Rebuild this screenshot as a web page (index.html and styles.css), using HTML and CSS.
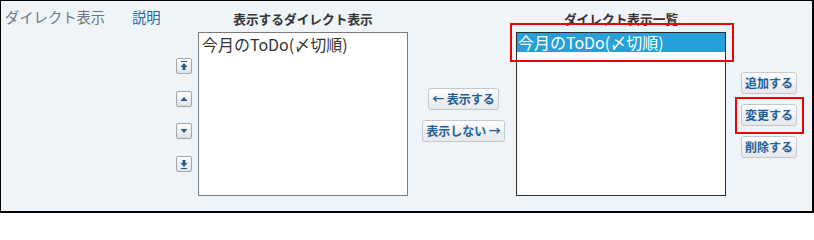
FILE: index.html
```html
<!DOCTYPE html>
<html lang="ja">
<head>
<meta charset="utf-8">
<title>ダイレクト表示</title>
<link rel="stylesheet" href="styles.css">
</head>
<body>
<div class="panel">
  <div class="label">ダイレクト表示</div>
  <div class="help"><a href="#">説明</a></div>
  <div class="title t-left">表示するダイレクト表示</div>
  <div class="title t-right">ダイレクト表示一覧</div>

  <div class="order-col">
    <button class="icon-btn" title="先頭へ">
      <svg viewBox="0 0 14 14" width="14" height="14"><rect x="4" y="2" width="6" height="1" fill="#1d5f8c"/><polygon points="7,4 3.5,8 10.5,8" fill="#1d5f8c"/><rect x="5.5" y="8" width="3" height="3" fill="#1d5f8c"/></svg>
    </button>
    <button class="icon-btn" title="上へ">
      <svg viewBox="0 0 14 14" width="14" height="14"><polygon points="7,5 3.5,9 10.5,9" fill="#1d5f8c"/></svg>
    </button>
    <button class="icon-btn" title="下へ">
      <svg viewBox="0 0 14 14" width="14" height="14"><polygon points="3.5,5 10.5,5 7,9" fill="#1d5f8c"/></svg>
    </button>
    <button class="icon-btn" title="末尾へ">
      <svg viewBox="0 0 14 14" width="14" height="14"><rect x="5.5" y="3" width="3" height="3" fill="#1d5f8c"/><polygon points="3.5,6 10.5,6 7,10" fill="#1d5f8c"/><rect x="4" y="11" width="6" height="1" fill="#1d5f8c"/></svg>
    </button>
  </div>

  <div class="list list-left">
    <div class="opt">今月のToDo(〆切順)</div>
  </div>

  <div class="mid-col">
    <button class="btn">← 表示する</button>
    <button class="btn">表示しない →</button>
  </div>

  <div class="list list-right">
    <div class="opt selected">今月のToDo(〆切順)</div>
  </div>

  <div class="action-col">
    <button class="btn">追加する</button>
    <button class="btn">変更する</button>
    <button class="btn">削除する</button>
  </div>

  <div class="mark mark-list"></div>
  <div class="mark mark-btn"></div>
</div>
</body>
</html>
```
FILE: styles.css
```css
html, body {
  margin: 0;
  padding: 0;
  background: #ffffff;
}

.panel {
  position: relative;
  box-sizing: border-box;
  width: 814px;
  height: 213px;
  border-style: solid;
  border-color: #000;
  border-width: 1px 2px 2px 1px;
  background: #eff4f8;
  font-family: "Noto Sans CJK JP", "Noto Sans", sans-serif;
  display: grid;
  grid-template-columns: 131px 44px 22px 210px 108px 210px 1fr;
  grid-template-rows: 31px 1fr;
}

.label {
  grid-column: 1;
  grid-row: 1;
  padding: 6px 0 0 4px;
  font-size: 14.3px;
  line-height: 20px;
  color: #687886;
  white-space: nowrap;
}

.help {
  grid-column: 2;
  grid-row: 1;
  padding-top: 6px;
  font-size: 14.3px;
  line-height: 20px;
}

.help a {
  color: #1a6ca6;
  text-decoration: none;
}

.title {
  grid-row: 1;
  padding-top: 9px;
  font-size: 12.7px;
  line-height: 18px;
  font-weight: bold;
  color: #333;
  text-align: center;
  white-space: nowrap;
}

.t-left { grid-column: 4; }
.t-right { grid-column: 6; }

.order-col {
  grid-column: 3;
  grid-row: 2;
  display: flex;
  flex-direction: column;
  gap: 16.5px;
  padding-top: 26px;
}

.icon-btn {
  box-sizing: border-box;
  width: 16px;
  height: 16px;
  padding: 0;
  margin: 0;
  border: 1px solid #a2a6aa;
  border-radius: 2px;
  background: linear-gradient(#ffffff, #e2e2e2);
  display: flex;
  align-items: center;
  justify-content: center;
}

.icon-btn svg { display: block; }

.list {
  grid-row: 2;
  box-sizing: border-box;
  height: 164px;
  background: #fff;
  border: 1px solid #7a7a7a;
}

.list-left { grid-column: 4; }
.list-right {
  grid-column: 6;
  border-color: #2b2b2b;
}

.opt {
  font-size: 16px;
  line-height: 19px;
  padding-left: 3px;
  color: #333;
  white-space: nowrap;
}

.list-left .opt { padding-top: 2px; }

.opt.selected {
  background: #279fd9;
  color: #fff;
  padding-left: 1px;
}

.mid-col {
  grid-column: 5;
  grid-row: 2;
  display: flex;
  flex-direction: column;
  align-items: center;
  gap: 10px;
  padding: 56px 0 0 3px;
}

.action-col {
  grid-column: 7;
  grid-row: 2;
  display: flex;
  flex-direction: column;
  align-items: flex-start;
  gap: 10px;
  padding: 40px 0 0 15px;
}

.btn {
  box-sizing: border-box;
  height: 22px;
  margin: 0;
  padding: 0 3px;
  border: 1px solid #c2c8ce;
  border-radius: 3px;
  background: linear-gradient(#fdfdfd, #e7e8e9);
  color: #1a5f9c;
  font-family: "Noto Sans CJK JP", "Noto Sans", sans-serif;
  font-size: 12px;
  font-weight: bold;
  line-height: 20px;
  white-space: nowrap;
}

.action-col .btn { width: 56px; }

.mark {
  position: absolute;
  box-sizing: border-box;
  border: 2.5px solid #ee0000;
}

.mark-list {
  left: 509px;
  top: 22px;
  width: 224px;
  height: 39px;
}

.mark-btn {
  left: 734px;
  top: 96px;
  width: 69px;
  height: 37px;
}
```
